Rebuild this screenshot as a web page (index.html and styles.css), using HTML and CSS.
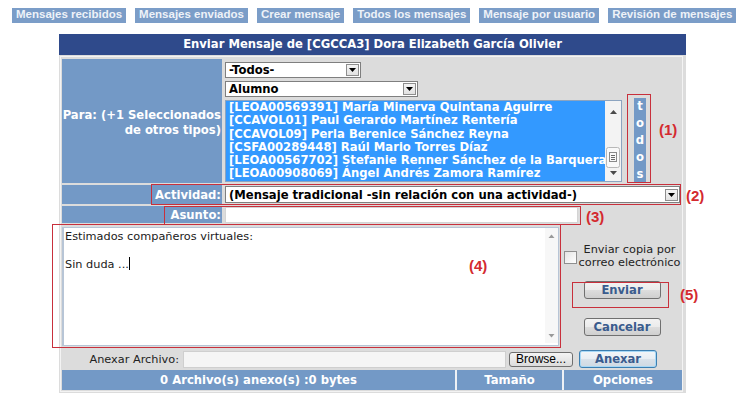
FILE: index.html
```html
<!DOCTYPE html>
<html lang="es">
<head>
<meta charset="utf-8">
<title>Enviar Mensaje</title>
<link rel="stylesheet" href="styles.css">
</head>
<body>
<nav class="tabs">
  <a class="tab">Mensajes recibidos</a>
  <a class="tab">Mensajes enviados</a>
  <a class="tab">Crear mensaje</a>
  <a class="tab">Todos los mensajes</a>
  <a class="tab">Mensaje por usuario</a>
  <a class="tab">Revisión de mensajes</a>
</nav>

<div class="panel">
  <div class="panel-title">Enviar Mensaje de [CGCCA3] Dora Elizabeth García Olivier</div>
  <div class="panel-body">
    <div class="frame">
      <div class="row row-para">
        <div class="label label-para">Para: (+1 Seleccionados<br>de otros tipos)</div>
        <div class="field field-para">
          <div class="para-controls">
            <div class="select sel-todos"><span class="sel-text">-Todos-</span><span class="sel-arrow"><svg width="7" height="4" viewBox="0 0 7 4"><path d="M0 0h7L3.5 4z" fill="#000"/></svg></span></div>
            <div class="select sel-alumno"><span class="sel-text">Alumno</span><span class="sel-arrow"><svg width="7" height="4" viewBox="0 0 7 4"><path d="M0 0h7L3.5 4z" fill="#000"/></svg></span></div>
            <div class="listbox">
              <ul class="list">
                <li>[LEOA00569391] María Minerva Quintana Aguirre</li>
                <li>[CCAVOL01] Paul Gerardo Martínez Rentería</li>
                <li>[CCAVOL09] Perla Berenice Sánchez Reyna</li>
                <li>[CSFA00289448] Raúl Mario Torres Díaz</li>
                <li>[LEOA00567702] Stefanie Renner Sánchez de la Barquera</li>
                <li>[LEOA00908069] Ángel Andrés Zamora Ramírez</li>
              </ul>
              <div class="vscroll">
                <svg width="16" height="80" viewBox="0 0 16 80">
                  <rect width="16" height="80" fill="#f3f3f3"/>
                  <path d="M5 13h7l-3.5-4z" fill="#4a4a4a"/>
                  <rect x="1.5" y="46.5" width="13" height="20" rx="2" fill="#f9f9f9" stroke="#b8b8b8"/>
                  <rect x="4.5" y="51.5" width="7" height="9" fill="none" stroke="#8a8a8a"/>
                  <path d="M6 54.5h4M6 56.5h4M6 58.5h4" stroke="#6a6a6a"/>
                  <path d="M5 70h7l-3.5 4z" fill="#4a4a4a"/>
                </svg>
              </div>
            </div>
          </div>
          <div class="todos"><span>t</span><span>o</span><span>d</span><span>o</span><span>s</span></div>
        </div>
      </div>

      <div class="row row-act">
        <div class="label">Actividad:</div>
        <div class="field">
          <div class="select sel-act"><span class="sel-text">(Mensaje tradicional -sin relación con una actividad-)</span><span class="sel-arrow"><svg width="7" height="4" viewBox="0 0 7 4"><path d="M0 0h7L3.5 4z" fill="#000"/></svg></span></div>
        </div>
      </div>

      <div class="row row-asunto">
        <div class="label">Asunto:</div>
        <div class="field">
          <div class="textbox asunto"></div>
        </div>
      </div>

      <div class="row row-msg">
        <div class="textarea">
          <div class="ta-text">Estimados compañeros virtuales:<br><br>Sin duda ...<span class="caret"></span></div>
          <div class="ta-scroll">
            <svg width="13" height="115" viewBox="0 0 13 115">
              <rect width="13" height="115" fill="#f7f7f7"/>
              <path d="M3.5 10h6l-3-3.5z" fill="#9a9a9a"/>
              <path d="M3.5 106h6l-3 3.5z" fill="#9a9a9a"/>
            </svg>
          </div>
        </div>
        <div class="side">
          <div class="copy">
            <span class="checkbox"></span>
            <span class="copy-text">Enviar copia por<br>correo electrónico</span>
          </div>
          <div class="btn btn-enviar">Enviar</div>
          <div class="btn btn-cancelar">Cancelar</div>
        </div>
      </div>

      <div class="row row-anexar">
        <div class="anexar-label">Anexar Archivo:</div>
        <div class="textbox filebox"></div>
        <div class="browse">Browse...</div>
        <div class="btn btn-anexar">Anexar</div>
      </div>

      <div class="row row-foot">
        <div class="foot-cell foot-files">0 Archivo(s) anexo(s) :0 bytes</div>
        <div class="foot-cell foot-size">Tamaño</div>
        <div class="foot-cell foot-opts">Opciones</div>
      </div>
    </div>
  </div>
</div>

<div class="mark mark-1"></div>
<div class="mark mark-2"></div>
<div class="mark mark-3"></div>
<div class="mark mark-4"></div>
<div class="mark mark-5"></div>
<div class="tag tag-1">(1)</div>
<div class="tag tag-2">(2)</div>
<div class="tag tag-3">(3)</div>
<div class="tag tag-4">(4)</div>
<div class="tag tag-5">(5)</div>
</body>
</html>
```

FILE: styles.css
```css
* { box-sizing: border-box; }

body {
  margin: 0;
  width: 741px;
  height: 393px;
  overflow: hidden;
  position: relative;
  background: #fff;
  font-family: "DejaVu Sans", Verdana, sans-serif;
  color: #000;
}

/* top navigation */
.tabs {
  display: flex;
  gap: 9px;
  height: 34px;
  padding: 8px 0 0 12px;
}
.tab {
  height: 15px;
  line-height: 15px;
  padding: 0 4px;
  background: #7b9dc8;
  color: #eef2f8;
  font: bold 11.5px "Liberation Sans", Arial, sans-serif;
  white-space: nowrap;
}

/* panel */
.panel {
  margin-left: 59px;
  width: 627px;
}
.panel-title {
  height: 21px;
  line-height: 21px;
  background: #2f4a8b;
  color: #fff;
  text-align: center;
  font-weight: bold;
  font-size: 11.6px;
}
.panel-body {
  background: #dcdcdc;
  padding: 1px 3px 1px 1px;
}
.frame {
  border: 1px solid #f3f3f3;
  padding: 2px 0 1px 1px;
  display: flex;
  flex-direction: column;
  gap: 2px;
}
.row {
  display: flex;
  gap: 2px;
}
.label {
  width: 160px;
  flex: none;
  background: #7399c6;
  color: #fff;
  font-weight: bold;
  font-size: 11.6px;
  text-align: right;
  padding-right: 1px;
  display: flex;
  align-items: center;
  justify-content: flex-end;
  white-space: nowrap;
}
.field {
  flex: 1;
  padding-left: 1px;
}

/* Para row */
.row-para { height: 124px; }
.label-para {
  line-height: 15px;
  padding-top: 4px;
}
.field-para {
  display: flex;
  padding-top: 3px;
}
.para-controls {
  display: flex;
  flex-direction: column;
  gap: 3px;
}
.select {
  display: flex;
  align-items: center;
  justify-content: space-between;
  height: 16px;
  background: #fff;
  border: 1px solid #7f7f7f;
  padding: 0 1px 0 3px;
  font-weight: bold;
  font-size: 11.6px;
  white-space: nowrap;
}
.sel-arrow {
  width: 13px;
  height: 12px;
  background: linear-gradient(#f4f4f4, #e2e2e2);
  border: 1px solid #8e8e8e;
  display: flex;
  align-items: center;
  justify-content: center;
}
.sel-todos { width: 136px; }
.sel-alumno { width: 193px; }
.listbox {
  display: flex;
  width: 397px;
  height: 82px;
  border: 1px solid #8ca4c0;
  background: #fff;
}
.list {
  list-style: none;
  margin: 0;
  padding: 0 0 0 3px;
  flex: 1;
  background: #3399ff;
  color: #fff;
  font-weight: bold;
  font-size: 11.6px;
  line-height: 13.3px;
  white-space: nowrap;
  overflow: hidden;
}
.vscroll {
  width: 16px;
  flex: none;
  display: flex;
}
.todos {
  align-self: flex-end;
  margin-left: 12px;
  width: 12px;
  background: #7399c6;
  color: #fff;
  font-weight: bold;
  font-size: 11.6px;
  display: flex;
  flex-direction: column;
  align-items: center;
}
.todos span {
  height: 17px;
  line-height: 17px;
}

/* Actividad */
.row-act { height: 19px; }
.row-act .field { padding-top: 1px; }
.sel-act {
  width: 455px;
  height: 17px;
}

/* Asunto */
.row-asunto { height: 17px; }
.textbox {
  background: #fff;
  border: 1px solid #d4d4d4;
}
.asunto {
  width: 353px;
  height: 16px;
  margin-top: 1px;
}

/* message */
.row-msg {
  height: 123px;
  gap: 3px;
}
.textarea {
  width: 497px;
  height: 119px;
  margin-top: 2px;
  display: flex;
  background: #fff;
  border: 1px solid #b7c5d6;
  border-left-width: 2px;
}
.ta-text {
  flex: 1;
  padding: 2px 0 0 1px;
  font-size: 11.3px;
  line-height: 13.5px;
  color: #1a1a1a;
}
.caret {
  display: inline-block;
  width: 1px;
  height: 13px;
  background: #000;
  vertical-align: -2px;
}
.ta-scroll {
  width: 13px;
  flex: none;
  display: flex;
}
.side {
  width: 120px;
  display: flex;
  flex-direction: column;
  align-items: center;
}
.copy {
  display: flex;
  align-items: center;
  align-self: stretch;
  margin-top: 18px;
  padding-left: 2px;
}
.checkbox {
  width: 13px;
  height: 13px;
  flex: none;
  border: 1px solid #8f8f8f;
  background: linear-gradient(135deg, #e4e4e4, #fff);
  margin-top: 2px;
}
.copy-text {
  flex: 1;
  text-align: center;
  font-size: 11.3px;
  line-height: 13px;
  color: #222;
  white-space: nowrap;
}
.btn {
  width: 77px;
  height: 18px;
  line-height: 16px;
  text-align: center;
  border: 1px solid #707070;
  border-radius: 3px;
  background: linear-gradient(#f3f3f3 0%, #ebebeb 50%, #dddddd 51%, #cfcfcf 100%);
  color: #3a5c8e;
  font-weight: bold;
  font-size: 11.6px;
}
.btn-enviar { margin-top: 12px; }
.btn-cancelar { margin-top: 19px; }

/* anexar */
.row-anexar {
  height: 18px;
  gap: 0;
  align-items: center;
}
.anexar-label {
  width: 119px;
  text-align: right;
  font-size: 11.3px;
  color: #222;
  padding-right: 2px;
}
.filebox {
  width: 323px;
  height: 17px;
  margin-left: 2px;
  background: #f5f5f5;
  border-color: #cfcfcf;
}
.browse {
  width: 64px;
  height: 15px;
  margin-left: 3px;
  border: 1px solid #6f6f6f;
  border-radius: 3px;
  background: linear-gradient(#f4f4f4, #dcdcdc);
  font: 12px/13px "Liberation Sans", Arial, sans-serif;
  text-align: center;
  color: #000;
}
.btn-anexar {
  margin-left: 6px;
  width: 78px;
  border-color: #3c7fb1;
  box-shadow: inset 0 0 0 1px #a7d8f6;
  background: linear-gradient(#f2f6f9 0%, #e8eef3 50%, #d9e2ea 51%, #cfd9e2 100%);
}

/* footer */
.row-foot {
  height: 20px;
  background: #eef1f5;
}
.foot-cell {
  background: #7399c6;
  color: #fff;
  font-weight: bold;
  font-size: 11.6px;
  line-height: 20px;
  text-align: center;
}
.foot-files { width: 393px; }
.foot-size { width: 105px; }
.foot-opts { flex: 1; }

/* annotations */
.mark {
  position: absolute;
  border: 1px solid #c8303c;
}
.mark-1 { left: 627px; top: 94px; width: 24px; height: 89px; }
.mark-2 { left: 151px; top: 184px; width: 530px; height: 21px; }
.mark-3 { left: 164px; top: 206px; width: 417px; height: 19px; }
.mark-4 { left: 52px; top: 224px; width: 509px; height: 124px; }
.mark-5 { left: 572px; top: 282px; width: 97px; height: 26px; }

.tag {
  position: absolute;
  font: bold 15px/16px "Liberation Sans", Arial, sans-serif;
  color: #d42a2f;
}
.tag-1 { left: 659px; top: 122px; }
.tag-2 { left: 686px; top: 188px; }
.tag-3 { left: 586px; top: 209px; }
.tag-4 { left: 469px; top: 258px; }
.tag-5 { left: 680px; top: 287px; }
```
